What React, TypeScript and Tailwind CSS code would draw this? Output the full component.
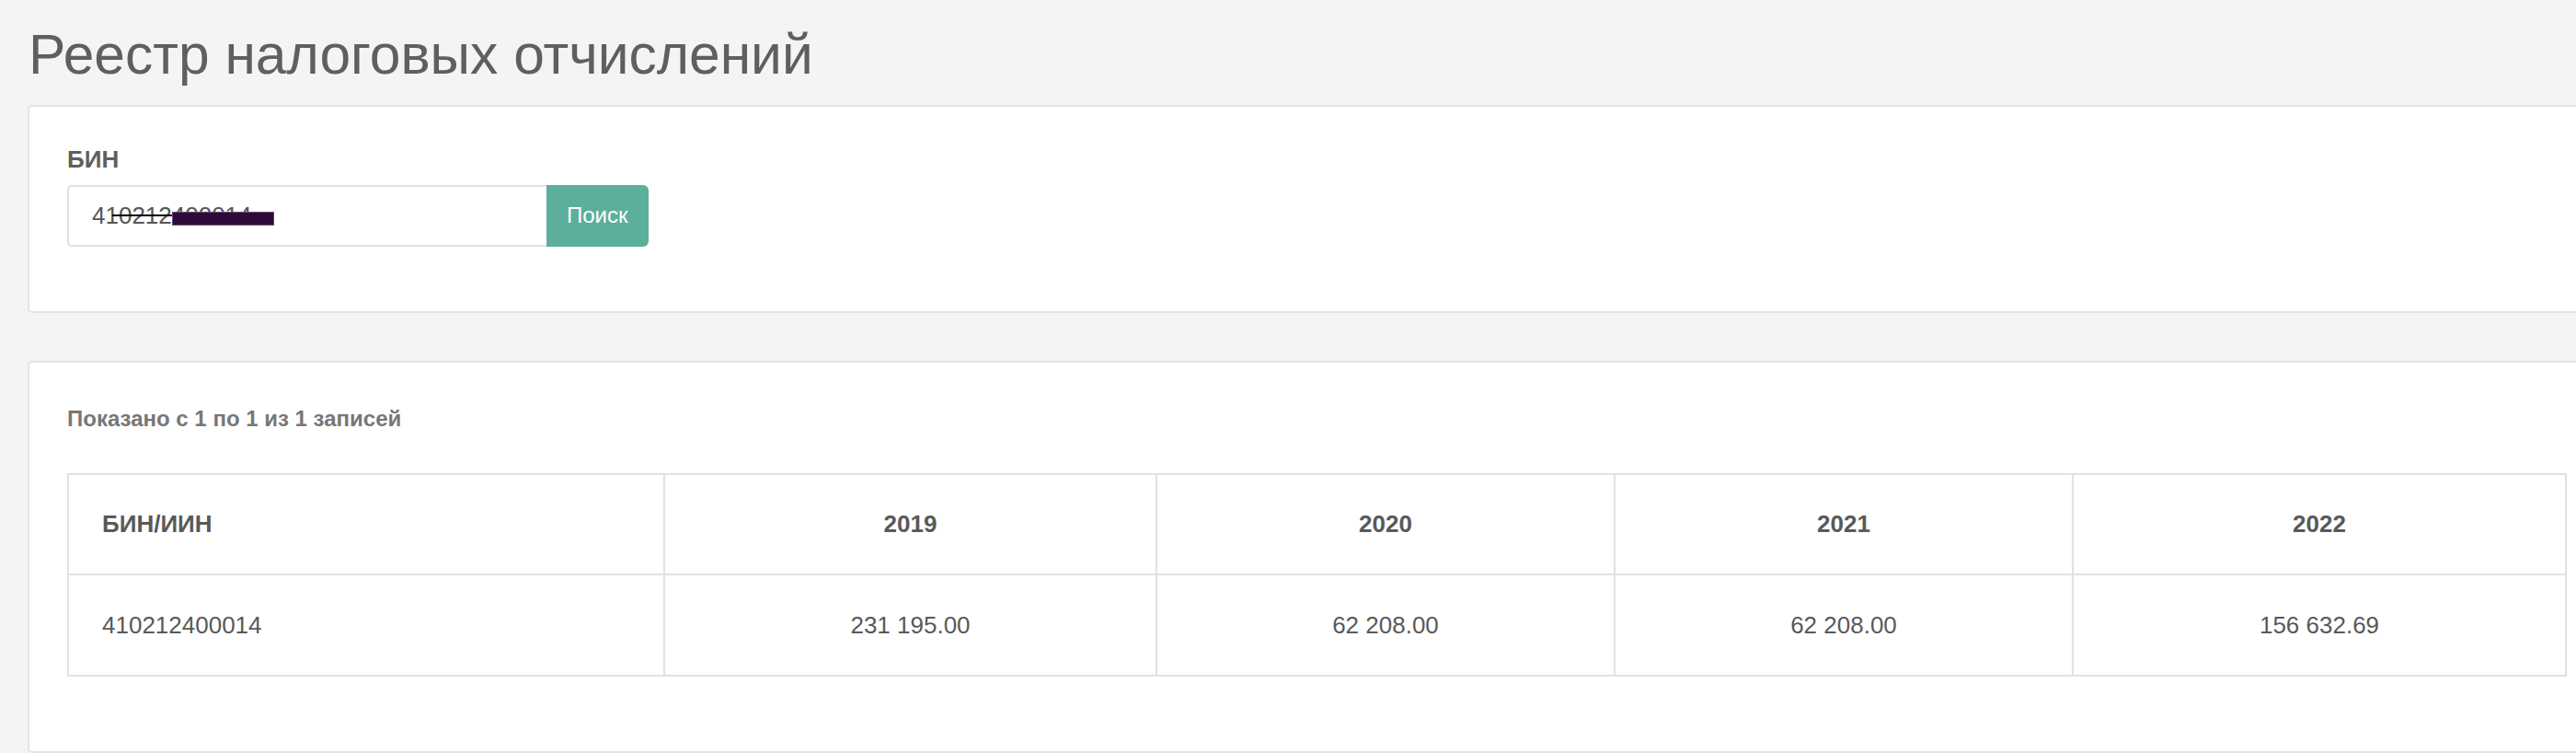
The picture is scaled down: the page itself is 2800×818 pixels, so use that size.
const years = ["2019", "2020", "2021", "2022"];

const record = {
  bin: "410212400014",
  values: ["231 195.00", "62 208.00", "62 208.00", "156 632.69"],
};

export default function App() {
  return (
    <div className="min-h-screen overflow-hidden bg-[#f4f4f4] font-['Liberation_Sans',Arial,sans-serif] text-[#5e5e5e]">
      <div className="w-[2860px] pl-[30px] pr-[29px]">
        <h1 className="pt-[29px] pl-[1px] text-[60.5px] font-normal leading-none text-[#5f5f5f]">
          Реестр налоговых отчислений
        </h1>

        {/* search card */}
        <section className="mt-[24px] h-[226px] rounded-[5px] border-2 border-[#e3e3e3] bg-white pl-[41px] pt-[44px]">
          <label className="block text-[26px] font-bold leading-none text-[#5f5f5f]">БИН</label>
          <div className="mt-[15px] flex h-[67px]">
            <div className="relative w-[521px]">
              <input
                readOnly
                value={record.bin}
                className="h-full w-full rounded-l-[5px] border-2 border-r-0 border-[#dde1e5] bg-white pl-[25px] text-[26px] text-[#555] outline-none"
              />
              <span className="absolute left-[49px] top-[32px] h-[2px] w-[68px] bg-black" />
              <span className="absolute left-[114px] top-[29px] h-[15px] w-[111px] border border-[#6b4a78] bg-[#2c0b3b]" />
            </div>
            <button className="rounded-r-[6px] bg-[#5baf9b] px-[22px] text-[24px] text-white">Поиск</button>
          </div>
        </section>

        {/* results card */}
        <section className="mt-[52px] h-[426px] rounded-[5px] border-2 border-[#e3e3e3] bg-white pl-[41px] pt-[49px]">
          <p className="text-[24px] font-bold leading-none text-[#777]">Показано с 1 по 1 из 1 записей</p>
          <table className="mt-[47px] w-[2715px] table-fixed border-collapse border-2 border-[#e1e1e1] text-[26px] leading-none text-[#595959]">
            <colgroup>
              <col className="w-[648px]" />
              <col className="w-[535px]" />
              <col className="w-[498px]" />
              <col className="w-[498px]" />
              <col className="w-[536px]" />
            </colgroup>
            <thead>
              <tr className="h-[109px]">
                <th className="border-2 border-[#e1e1e1] pl-[36px] text-left font-bold">БИН/ИИН</th>
                {years.map((y) => (
                  <th key={y} className="border-2 border-[#e1e1e1] text-center font-bold">
                    {y}
                  </th>
                ))}
              </tr>
            </thead>
            <tbody>
              <tr className="h-[110px]">
                <td className="border-2 border-[#e1e1e1] pl-[36px] text-left">{record.bin}</td>
                {record.values.map((v, i) => (
                  <td key={i} className="border-2 border-[#e1e1e1] text-center">
                    {v}
                  </td>
                ))}
              </tr>
            </tbody>
          </table>
        </section>
      </div>
    </div>
  );
}
